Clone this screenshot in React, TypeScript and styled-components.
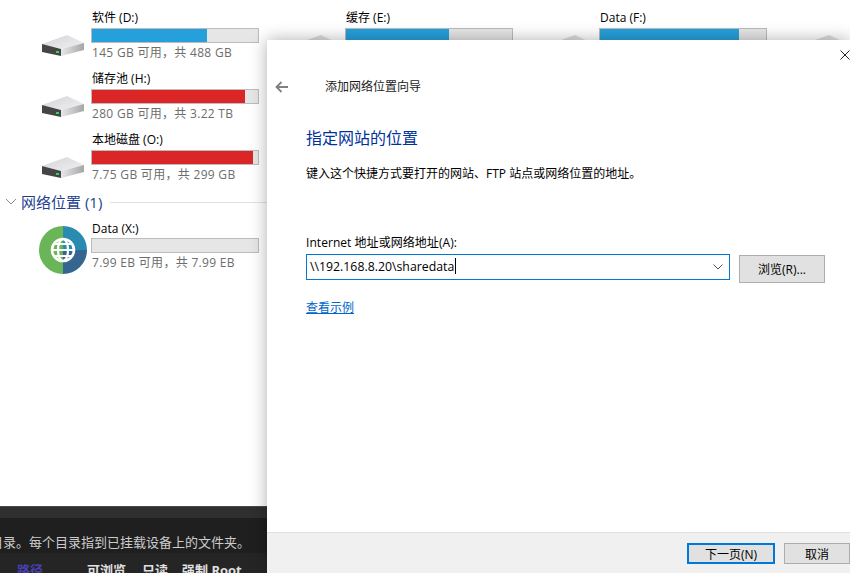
import React from "react";
import styled, {createGlobalStyle} from "styled-components";

const Global = createGlobalStyle`
html, body {
  margin: 0;
  padding: 0;
  background: #ffffff;
  overflow: hidden;
}
`;

const font = `"Open Sans", "Noto Sans CJK SC", sans-serif`;

const Page = styled.div`
position: relative;
display: flex;
flex-direction: column;
width: 850px;
height: 573px;
overflow: hidden;
background: #ffffff;
font-family: ${font};
font-size: 12px;
`;

const Explorer = styled.div`
flex: 1;
min-height: 0;
padding-top: 10px;
overflow: hidden;
`;

const DriveGrid = styled.div`
display: grid;
grid-template-columns: repeat(4, 254px);
grid-auto-rows: 61px;
padding-left: 42px;
`;

const Tile = styled.div`
display: flex;
align-items: flex-start;
gap: 7px;
`;

const DiskSlot = styled.div`
flex: none;
width: 42px;
padding-top: 24px;
`;

const TileBody = styled.div`
display: flex;
flex-direction: column;
width: 168px;
`;

const TileName = styled.div`
height: 18px;
padding-left: 1px;
line-height: 16px;
color: #000000;
white-space: nowrap;
`;

const NetworkName = styled(TileName)`
height: 17px;
`;

const Track = styled.div`
box-sizing: border-box;
height: 15px;
border: 1px solid #bcbcbc;
background: #e6e6e6;
`;

const Fill = styled.div<{$tone: string}>`
height: 100%;
background: ${(p) => p.$tone};
`;

const TileStats = styled.div`
height: 20px;
padding-left: 1px;
line-height: 20px;
color: #6d6d6d;
letter-spacing: 0.3px;
white-space: nowrap;
`;

const SectionHead = styled.div`
display: flex;
align-items: center;
height: 20px;
margin-top: -1px;
padding-left: 5px;
`;

const SectionTitle = styled.div`
margin-left: 4px;
font-size: 15px;
line-height: 20px;
color: #1e3f8f;
white-space: nowrap;
`;

const SectionRule = styled.div`
flex: 1;
height: 1px;
margin-left: 8px;
background: #e2e2e2;
`;

const NetworkRow = styled.div`
display: flex;
gap: 4px;
margin-top: 9px;
padding-left: 39px;
`;

const GlobeSlot = styled.div`
flex: none;
width: 48px;
padding-top: 5px;
`;

const Terminal = styled.div`
flex: none;
height: 67px;
display: flex;
flex-direction: column;
overflow: hidden;
background: #1f1f1f;
color: #cccccc;
`;

const TerminalBar = styled.div`
flex: none;
height: 11px;
border-top: 1px solid #4a4a4a;
background: #2f2f2f;
`;

const TerminalNote = styled.div`
flex: none;
height: 35px;
padding-top: 9px;
box-sizing: border-box;
margin-left: -10px;
line-height: 30px;
font-size: 13px;
white-space: nowrap;
`;

const TerminalHead = styled.div`
flex: 1;
display: flex;
background: #252525;
padding-top: 2px;
line-height: 30px;
font-size: 13px;
font-weight: 700;
white-space: nowrap;
`;

const HeadCell = styled.div<{$width: number; $accent?: boolean}>`
flex: none;
width: ${(p) => p.$width}px;
color: ${(p) => (p.$accent ? "#4a3fb5" : "#e0e0e0")};
`;

const Dialog = styled.div`
position: absolute;
left: 267px;
top: 40px;
width: 583px;
height: 533px;
display: flex;
flex-direction: column;
background: #ffffff;
box-shadow: 0 0 16px rgba(0, 0, 0, 0.32);
`;

const CloseIcon = styled.svg`
position: absolute;
right: 0;
top: 10px;
`;

const DialogHead = styled.div`
display: flex;
align-items: center;
height: 20px;
margin-top: 37px;
padding-left: 8px;
`;

const DialogTitle = styled.div`
margin-left: 36px;
line-height: 20px;
color: #1a1a1a;
`;

const DialogBody = styled.div`
flex: 1;
padding: 0 25px 0 39px;
`;

const Heading = styled.div`
margin-top: 30px;
font-size: 16px;
line-height: 22px;
color: #003399;
`;

const Description = styled.div`
margin-top: 15px;
line-height: 20px;
color: #000000;
`;

const FieldLabel = styled.div`
margin-top: 49px;
line-height: 20px;
letter-spacing: 0.05px;
color: #000000;
`;

const FieldRow = styled.div`
display: flex;
align-items: flex-start;
gap: 9px;
margin-top: 1px;
`;

const AddressBox = styled.div`
flex: none;
box-sizing: border-box;
display: flex;
align-items: center;
width: 424px;
height: 26px;
padding: 0 6px 0 3px;
border: 1px solid #0078d7;
`;

const AddressText = styled.div`
flex: 1;
font-size: 12.3px;
line-height: 18px;
color: #000000;
`;

const Caret = styled.span`
display: inline-block;
width: 1px;
height: 16px;
margin-left: 1px;
vertical-align: -3px;
background: #000000;
`;

const Button = styled.div<{$width: number; $height: number; $primary?: boolean}>`
flex: none;
box-sizing: border-box;
display: flex;
align-items: center;
justify-content: center;
width: ${(p) => p.$width}px;
height: ${(p) => p.$height}px;
border: ${(p) => (p.$primary ? "2px solid #0078d7" : "1px solid #adadad")};
background: #e1e1e1;
color: #000000;
`;

const BrowseButton = styled(Button)`
margin-top: 1px;
`;

const ExampleLink = styled.a`
display: inline-block;
margin-top: 16px;
line-height: 18px;
color: #0066cc;
text-decoration: underline;
`;

const Footer = styled.div`
flex: none;
box-sizing: border-box;
display: flex;
justify-content: flex-end;
gap: 9px;
height: 41px;
padding-top: 10px;
border-top: 1px solid #dfdfdf;
background: #f0f0f0;
`;

const DiskIcon = () => (
  <svg width="42" height="24" viewBox="0 0 42 24">
    <defs>
      <linearGradient id="disk-top" x1="0" y1="0" x2="1" y2="1">
        <stop offset="0" stopColor="#d4d4d8" />
        <stop offset="1" stopColor="#f0f0f2" />
      </linearGradient>
      <linearGradient id="disk-side" x1="0" y1="0" x2="1" y2="0">
        <stop offset="0" stopColor="#e8e8e8" />
        <stop offset="1" stopColor="#a6a6a6" />
      </linearGradient>
    </defs>
    <polygon points="0,10 25,1 42,9 19,15" fill="url(#disk-top)" />
    <polygon points="0,10 19,15 19,22 0,18" fill="#454545" />
    <polygon points="19,15 42,9 42,16 19,22" fill="url(#disk-side)" />
    <rect x="14" y="17" width="3" height="2" fill="#35d45a" />
  </svg>
);

const GlobeIcon = () => (
  <svg width="48" height="48" viewBox="0 0 48 48">
    <path d="M24 0a24 24 0 0 0 0 48z" fill="#6ab557" />
    <path d="M24 0a24 24 0 0 1 24 24H24z" fill="#2a8bb0" />
    <path d="M48 24a24 24 0 0 1-24 24V24z" fill="#35668f" />
    <g fill="none" stroke="#ffffff" strokeWidth="2.2">
      <circle cx="24" cy="24" r="11" strokeWidth="2.6" />
      <ellipse cx="24" cy="24" rx="5" ry="11" />
      <path d="M13 24h22M15 18h18M15 30h18" />
    </g>
  </svg>
);

const Chevron = () => (
  <svg width="12" height="8" viewBox="0 0 12 8">
    <path d="M1 1l5 5 5-5" fill="none" stroke="#8a8a8a" strokeWidth="1" />
  </svg>
);

const BackArrow = () => (
  <svg width="14" height="12" viewBox="0 0 14 12">
    <path d="M13 6H2M6.500 1L1.500 6l5 5" fill="none" stroke="#808080" strokeWidth="1.800" />
  </svg>
);

const DropArrow = () => (
  <svg width="10" height="6" viewBox="0 0 10 6">
    <path d="M.5.500L5 5 9.500.500" fill="none" stroke="#555555" strokeWidth="1" />
  </svg>
);

const drives = [
  {name: "软件 (D:)", used: 69.5, tone: "#26a0da", stats: "145 GB 可用，共 488 GB"},
  {name: "缓存 (E:)", used: 62, tone: "#26a0da"},
  {name: "Data (F:)", used: 84, tone: "#26a0da"},
  {},
  {name: "储存池 (H:)", used: 92, tone: "#da2626", stats: "280 GB 可用，共 3.22 TB"},
  {},
  {},
  {},
  {name: "本地磁盘 (O:)", used: 97, tone: "#da2626", stats: "7.75 GB 可用，共 299 GB"},
] as {name?: string; used?: number; tone?: string; stats?: string}[];

const App = () => {
  return (
    <Page>
      <Global />
      <Explorer>
        <DriveGrid>
          {drives.map((d, i) => (
            <Tile key={i}>
              {(d.name || i === 3) && (
                <DiskSlot>
                  <DiskIcon />
                </DiskSlot>
              )}
              {d.name && (
                <TileBody>
                  <TileName>{d.name}</TileName>
                  <Track>
                    <Fill $tone={d.tone!} style={{width: `${d.used}%`}} />
                  </Track>
                  <TileStats>{d.stats}</TileStats>
                </TileBody>
              )}
            </Tile>
          ))}
        </DriveGrid>
        <SectionHead>
          <Chevron />
          <SectionTitle>网络位置 (1)</SectionTitle>
          <SectionRule />
        </SectionHead>
        <NetworkRow>
          <GlobeSlot>
            <GlobeIcon />
          </GlobeSlot>
          <TileBody>
            <NetworkName>Data (X:)</NetworkName>
            <Track />
            <TileStats>7.99 EB 可用，共 7.99 EB</TileStats>
          </TileBody>
        </NetworkRow>
      </Explorer>
      <Terminal>
        <TerminalBar />
        <TerminalNote>目录。每个目录指到已挂载设备上的文件夹。</TerminalNote>
        <TerminalHead>
          <HeadCell $width={17} />
          <HeadCell $width={70} $accent>路径</HeadCell>
          <HeadCell $width={55}>可浏览</HeadCell>
          <HeadCell $width={40}>只读</HeadCell>
          <HeadCell $width={70}>强制 Root</HeadCell>
        </TerminalHead>
      </Terminal>
      <Dialog>
        <CloseIcon width="10" height="10" viewBox="0 0 10 10">
          <path d="M.5.500l9 9M9.500.500l-9 9" fill="none" stroke="#222222" strokeWidth="1" />
        </CloseIcon>
        <DialogHead>
          <BackArrow />
          <DialogTitle>添加网络位置向导</DialogTitle>
        </DialogHead>
        <DialogBody>
          <Heading>指定网站的位置</Heading>
          <Description>键入这个快捷方式要打开的网站、FTP 站点或网络位置的地址。</Description>
          <FieldLabel>Internet 地址或网络地址(A):</FieldLabel>
          <FieldRow>
            <AddressBox>
              <AddressText>
                \\192.168.8.20\sharedata
                <Caret />
              </AddressText>
              <DropArrow />
            </AddressBox>
            <BrowseButton $width={86} $height={28}>浏览(R)...</BrowseButton>
          </FieldRow>
          <ExampleLink>查看示例</ExampleLink>
        </DialogBody>
        <Footer>
          <Button $width={88} $height={21} $primary>下一页(N)</Button>
          <Button $width={66} $height={21}>取消</Button>
        </Footer>
      </Dialog>
    </Page>
  );
};

export default App;
